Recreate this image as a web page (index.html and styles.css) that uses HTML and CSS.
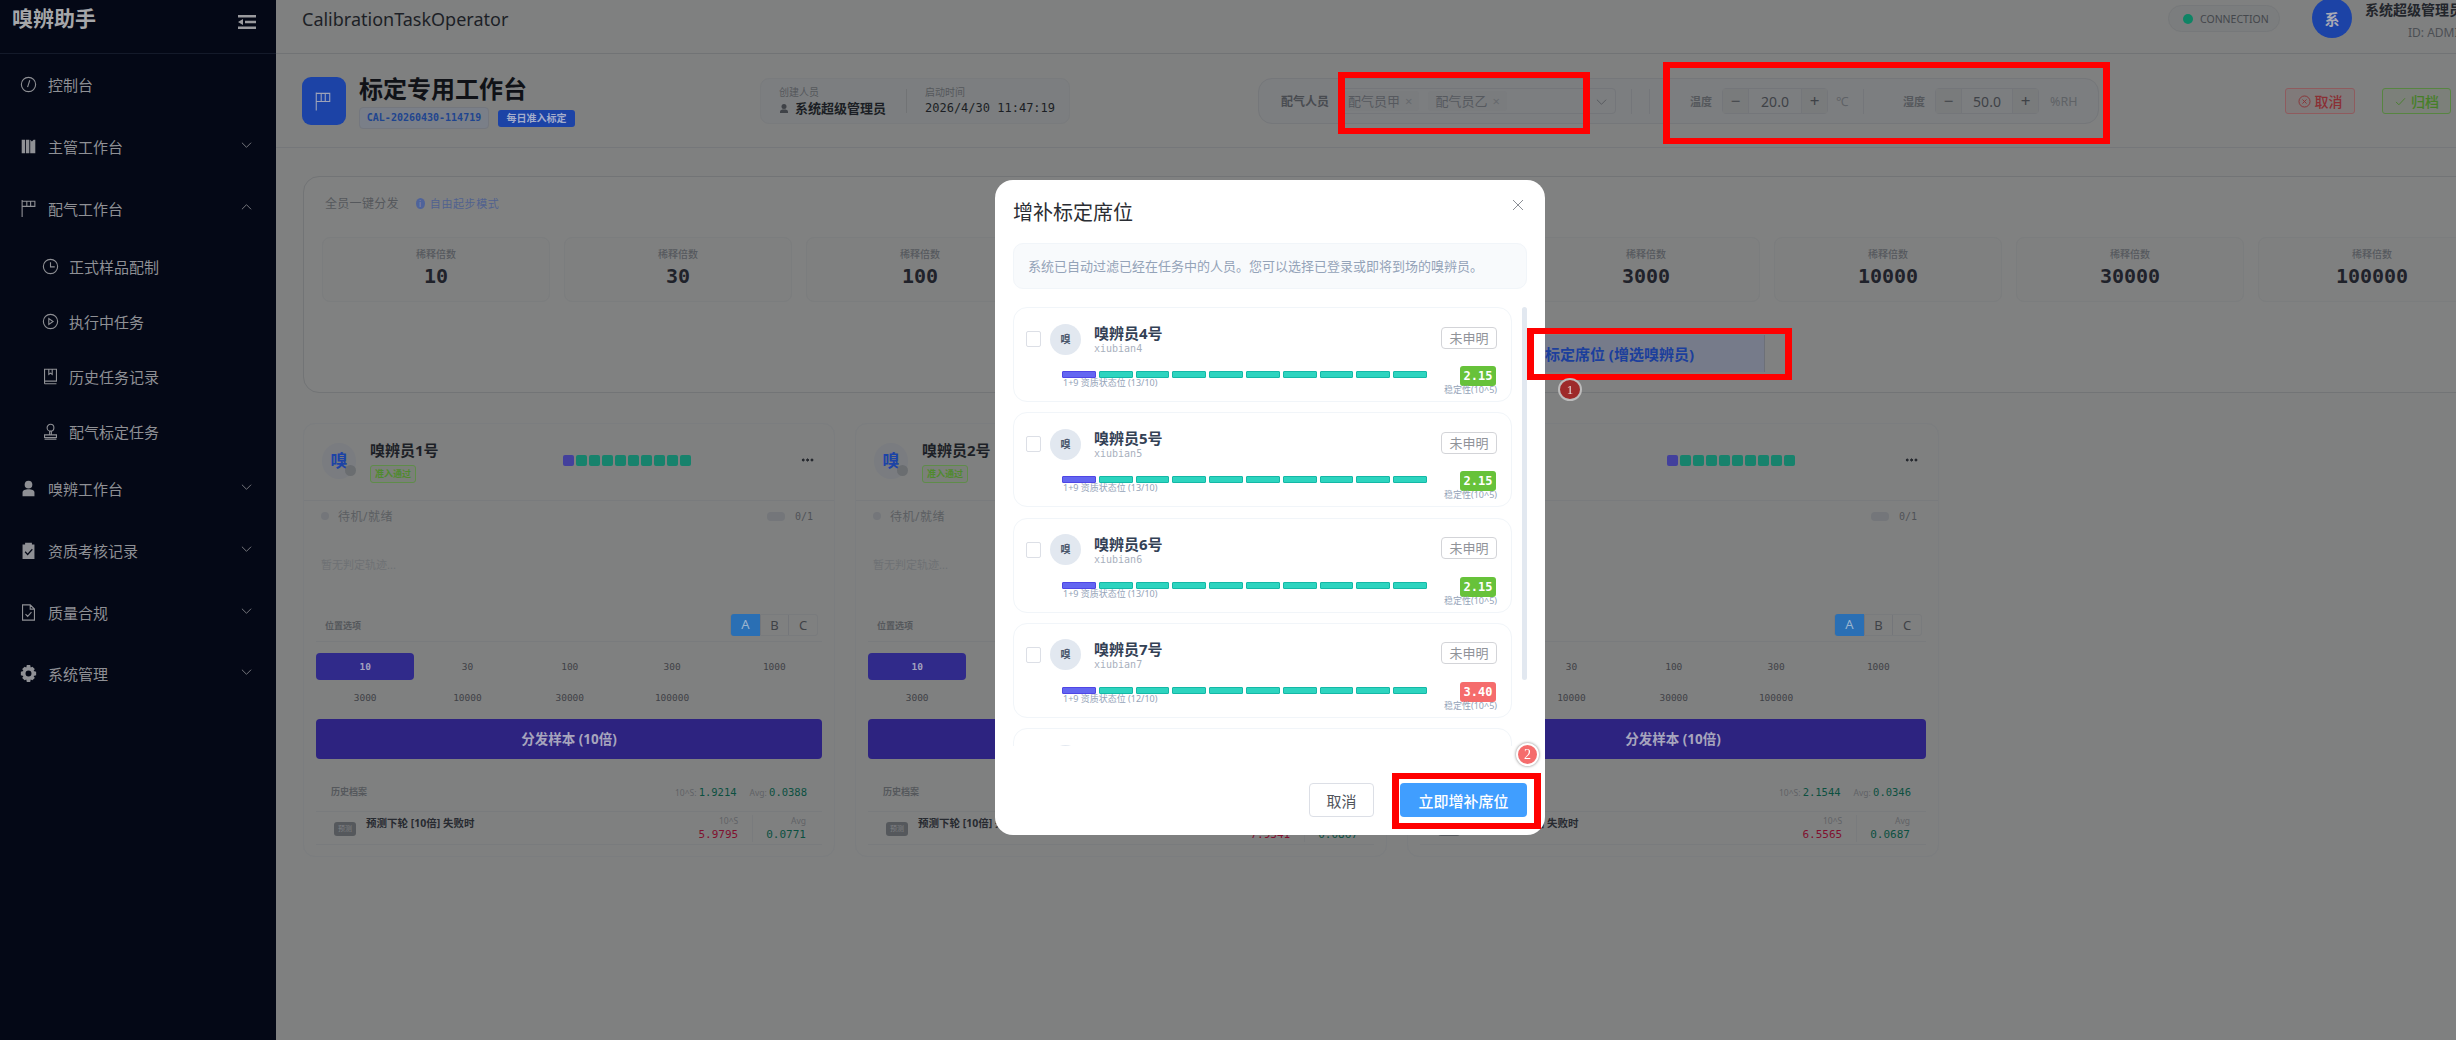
FILE: index.html
```html
<!DOCTYPE html>
<html lang="zh">
<head>
<meta charset="utf-8">
<title>CalibrationTaskOperator</title>
<link rel="stylesheet" href="styles.css">
</head>
<body>
<div class="app">
  <aside class="sidebar">
    <div class="logo-row"><span class="logo">嗅辨助手</span>
      <svg class="fold" viewBox="0 0 18 16"><path d="M0 1h18v2.4H0zM7 6.8h11v2.4H7zM0 12.6h18V15H0zM5 5v6L0 8z"/></svg>
    </div>
    <nav class="menu">
      <div class="mi"><svg class="ic" viewBox="0 0 20 20"><circle cx="10" cy="10" r="8.4"/><path d="M11.5 5l-2.6 8M7 14.500h0"/></svg><span>控制台</span></div>
      <div class="mi"><svg class="ic fill" viewBox="0 0 20 20"><path d="M2 2h4v16H2zM7 2h4v16H7zM12 2l2 2 2-2h2v16h-6z"/></svg><span>主管工作台</span><svg class="arrow" viewBox="0 0 12 8"><path d="M1 1.500l5 5 5-5"/></svg></div>
      <div class="mi"><svg class="ic" viewBox="0 0 20 20"><path d="M2.500 0v20M2.500 1.500h15v6h-15M8 1.500v6M12.500 1.500v6"/></svg><span>配气工作台</span><svg class="arrow" viewBox="0 0 12 8"><path d="M1 6.500l5-5 5 5"/></svg></div>
      <div class="mi sub"><svg class="ic" viewBox="0 0 20 20"><circle cx="10" cy="10" r="8.400"/><path d="M10 5v5.500h5"/></svg><span>正式样品配制</span></div>
      <div class="mi sub"><svg class="ic" viewBox="0 0 20 20"><circle cx="10" cy="10" r="8.400"/><path d="M8 6.500v7l5-3.500z"/></svg><span>执行中任务</span></div>
      <div class="mi sub"><svg class="ic" viewBox="0 0 20 20"><path d="M3 1.500h14v14H3zM3 18.500h14M3 15.500v3M8 1.500v6l2-1.500 2 1.500v-6"/></svg><span>历史任务记录</span></div>
      <div class="mi sub"><svg class="ic" viewBox="0 0 20 20"><circle cx="10" cy="5.500" r="4"/><path d="M9 9.500v4M11 9.500v4M3 14h14v3H3zM3 19h14"/></svg><span>配气标定任务</span></div>
      <div class="mi"><svg class="ic fill" viewBox="0 0 20 20"><circle cx="10" cy="5.500" r="4.500"/><path d="M3 19v-4c0-3 3-4 7-4s7 1 7 4v4z"/></svg><span>嗅辨工作台</span><svg class="arrow" viewBox="0 0 12 8"><path d="M1 1.500l5 5 5-5"/></svg></div>
      <div class="mi"><svg class="ic fill" viewBox="0 0 20 20"><path fill-rule="evenodd" d="M3 3h3V1h8v2h3v17H3zM6.500 11L5.500 12l3.500 4 6-7-1-1-5 5.500z"/></svg><span>资质考核记录</span><svg class="arrow" viewBox="0 0 12 8"><path d="M1 1.500l5 5 5-5"/></svg></div>
      <div class="mi"><svg class="ic" viewBox="0 0 20 20"><path d="M3 1h9l5 5v13H3zM12 1v5h5M6.500 12l2.500 2.500 4.500-5"/></svg><span>质量合规</span><svg class="arrow" viewBox="0 0 12 8"><path d="M1 1.500l5 5 5-5"/></svg></div>
      <div class="mi"><svg class="ic fill" viewBox="0 0 20 20"><path fill-rule="evenodd" d="M8 0h4l.6 3 2-1 2.800 2.800-1.400 2.200 3 .8v4.400l-3 .8 1.400 2.200-2.800 2.800-2-1-.6 3H8l-.6-3-2 1-2.800-2.800L4 12.800 1 12V7.800l3-.8-1.400-2.200L5.400 2l2 1zM10 6.500a3.500 3.500 0 100 7 3.500 3.500 0 000-7z"/></svg><span>系统管理</span><svg class="arrow" viewBox="0 0 12 8"><path d="M1 1.500l5 5 5-5"/></svg></div>
    </nav>
  </aside>

  <main class="main">
    <header class="topbar">
      <div class="app-title">CalibrationTaskOperator</div>
      <div class="conn"><i class="conn-dot"></i>CONNECTION</div>
      <div class="user-avatar">系</div>
      <div class="user-text"><div class="user-name">系统超级管理员</div><div class="user-id">ID: ADMIN</div></div>
    </header>

    <section class="head">
      <div class="head-icon"><svg viewBox="0 0 20 20"><path d="M2.500 0v20M2.500 1h15v9h-15M8 1v9M12.500 1v9"/></svg></div>
      <div class="head-title">
        <h1>标定专用工作台</h1>
        <div class="head-tags"><span class="code-tag">CAL-20260430-114719</span><span class="daily-tag">每日准入标定</span></div>
      </div>
      <div class="info-pill">
        <div class="info-a"><div class="info-label">创建人员</div><div class="info-name"><svg class="mini-user" viewBox="0 0 20 20"><circle cx="10" cy="6" r="5"/><path d="M2 19v-3c0-3 4-4 8-4s8 1 8 4v3z"/></svg>系统超级管理员</div></div>
        <div class="info-b"><div class="info-label">启动时间</div><div class="info-time">2026/4/30 11:47:19</div></div>
      </div>
      <div class="config-pill">
        <span class="cfg-label">配气人员</span>
        <div class="select">
          <span class="chip">配气员甲<em>×</em></span><span class="chip">配气员乙<em>×</em></span>
          <svg class="sel-arrow" viewBox="0 0 12 8"><path d="M1 1.500l5 5 5-5"/></svg>
        </div>
        <i class="vline v1"></i><i class="vline v2"></i>
        <span class="env-label l1">温度</span>
        <div class="stepper"><b>−</b><span>20.0</span><b>+</b></div>
        <span class="unit u1">℃</span>
        <i class="vline v3"></i>
        <span class="env-label l2">湿度</span>
        <div class="stepper s2"><b>−</b><span>50.0</span><b>+</b></div>
        <span class="unit u2">%RH</span>
      </div>
      <button class="act act-red"><svg viewBox="0 0 16 16"><circle cx="8" cy="8" r="6.800"/><path d="M5.500 5.500l5 5M10.500 5.500l-5 5"/></svg>取消</button>
      <button class="act act-green"><svg viewBox="0 0 16 16"><path d="M2.500 8.500l3.500 3.500 7.500-8"/></svg>归档</button>
    </section>

    <div class="content">
      <section class="panel">
        <div class="panel-head"><span class="panel-title">全员一键分发</span><span class="panel-mode"><i>i</i>自由起步模式</span></div>
        <div class="tiles">
          <div class="tile"><small>稀释倍数</small><strong>10</strong></div>
          <div class="tile"><small>稀释倍数</small><strong>30</strong></div>
          <div class="tile"><small>稀释倍数</small><strong>100</strong></div>
          <div class="tile"><small>稀释倍数</small><strong>300</strong></div>
          <div class="tile"><small>稀释倍数</small><strong>1000</strong></div>
          <div class="tile"><small>稀释倍数</small><strong>3000</strong></div>
          <div class="tile"><small>稀释倍数</small><strong>10000</strong></div>
          <div class="tile"><small>稀释倍数</small><strong>30000</strong></div>
          <div class="tile"><small>稀释倍数</small><strong>100000</strong></div>
        </div>
        <div class="add-seat">增补标定席位 (增选嗅辨员)</div>
      </section>

      <div class="ops">
        <article class="op">
          <div class="op-head">
            <div class="op-avatar">嗅<i></i></div>
            <div class="op-id"><div class="op-name">嗅辨员1号</div><span class="pass">准入通过</span></div>
            <div class="dots"><i class="p"></i><i></i><i></i><i></i><i></i><i></i><i></i><i></i><i></i><i></i></div>
            <div class="more"></div>
          </div>
          <div class="op-status"><i class="st-dot"></i><span class="st-text">待机/就绪</span><i class="st-pill"></i><span class="st-count">0/1</span></div>
          <div class="op-empty">暂无判定轨迹...</div>
          <div class="pos-row"><span>位置选项</span><div class="seg"><b class="on">A</b><b>B</b><b>C</b></div></div>
          <div class="dil"><span class="on">10</span><span>30</span><span>100</span><span>300</span><span>1000</span><span>3000</span><span>10000</span><span>30000</span><span>100000</span></div>
          <div class="send">分发样本 (10倍)</div>
          <div class="hist-head"><span class="hist-title">历史档案</span><span class="hist-stat">10^S: <b>1.9214</b></span><span class="hist-stat">Avg: <b>0.0388</b></span></div>
          <div class="hist-row"><span class="hist-icon">预测</span><span class="hist-name">预测下轮 [10倍] 失败时</span>
            <div class="hist-val s"><small>10^S</small><b class="bad">5.9795</b></div><div class="hist-val"><small>Avg</small><b>0.0771</b></div></div>
        </article>

        <article class="op">
          <div class="op-head">
            <div class="op-avatar">嗅<i></i></div>
            <div class="op-id"><div class="op-name">嗅辨员2号</div><span class="pass">准入通过</span></div>
            <div class="dots"><i class="p"></i><i></i><i></i><i></i><i></i><i></i><i></i><i></i><i></i><i></i></div>
            <div class="more"></div>
          </div>
          <div class="op-status"><i class="st-dot"></i><span class="st-text">待机/就绪</span><i class="st-pill"></i><span class="st-count">0/1</span></div>
          <div class="op-empty">暂无判定轨迹...</div>
          <div class="pos-row"><span>位置选项</span><div class="seg"><b class="on">A</b><b>B</b><b>C</b></div></div>
          <div class="dil"><span class="on">10</span><span>30</span><span>100</span><span>300</span><span>1000</span><span>3000</span><span>10000</span><span>30000</span><span>100000</span></div>
          <div class="send">分发样本 (10倍)</div>
          <div class="hist-head"><span class="hist-title">历史档案</span><span class="hist-stat">10^S: <b>2.0312</b></span><span class="hist-stat">Avg: <b>0.0402</b></span></div>
          <div class="hist-row"><span class="hist-icon">预测</span><span class="hist-name">预测下轮 [10倍] 失败时</span>
            <div class="hist-val s"><small>10^S</small><b class="bad">7.9341</b></div><div class="hist-val"><small>Avg</small><b>0.0867</b></div></div>
        </article>

        <article class="op">
          <div class="op-head">
            <div class="op-avatar">嗅<i></i></div>
            <div class="op-id"><div class="op-name">嗅辨员3号</div><span class="pass">准入通过</span></div>
            <div class="dots"><i class="p"></i><i></i><i></i><i></i><i></i><i></i><i></i><i></i><i></i><i></i></div>
            <div class="more"></div>
          </div>
          <div class="op-status"><i class="st-dot"></i><span class="st-text">待机/就绪</span><i class="st-pill"></i><span class="st-count">0/1</span></div>
          <div class="op-empty">暂无判定轨迹...</div>
          <div class="pos-row"><span>位置选项</span><div class="seg"><b class="on">A</b><b>B</b><b>C</b></div></div>
          <div class="dil"><span class="on">10</span><span>30</span><span>100</span><span>300</span><span>1000</span><span>3000</span><span>10000</span><span>30000</span><span>100000</span></div>
          <div class="send">分发样本 (10倍)</div>
          <div class="hist-head"><span class="hist-title">历史档案</span><span class="hist-stat">10^S: <b>2.1544</b></span><span class="hist-stat">Avg: <b>0.0346</b></span></div>
          <div class="hist-row"><span class="hist-icon">预测</span><span class="hist-name">预测下轮 [10倍] 失败时</span>
            <div class="hist-val s"><small>10^S</small><b class="bad">6.5565</b></div><div class="hist-val"><small>Avg</small><b>0.0687</b></div></div>
        </article>
      </div>
    </div>
  </main>
</div>

<div class="dialog">
  <div class="dlg-head"><h2>增补标定席位</h2><svg class="dlg-close" viewBox="0 0 12 12"><path d="M1 1l10 10M11 1L1 11"/></svg></div>
  <div class="dlg-note">系统已自动过滤已经在任务中的人员。您可以选择已登录或即将到场的嗅辨员。</div>
  <div class="dlg-list">
    <div class="cands">
      <div class="cand">
        <div class="cand-top"><i class="check"></i><span class="cand-av">嗅</span><div class="cand-id"><div class="cand-name">嗅辨员4号</div><div class="cand-user">xiubian4</div></div><span class="undeclared">未申明</span></div>
        <div class="cand-metric"><div class="bar-col"><div class="bar"><i class="p"></i><i></i><i></i><i></i><i></i><i></i><i></i><i></i><i></i><i></i></div><div class="bar-label">1+9 资质状态位 (13/10)</div></div>
        <div class="score-col"><span class="score">2.15</span><div class="score-label">稳定性(10^5)</div></div></div>
      </div>
      <div class="cand">
        <div class="cand-top"><i class="check"></i><span class="cand-av">嗅</span><div class="cand-id"><div class="cand-name">嗅辨员5号</div><div class="cand-user">xiubian5</div></div><span class="undeclared">未申明</span></div>
        <div class="cand-metric"><div class="bar-col"><div class="bar"><i class="p"></i><i></i><i></i><i></i><i></i><i></i><i></i><i></i><i></i><i></i></div><div class="bar-label">1+9 资质状态位 (13/10)</div></div>
        <div class="score-col"><span class="score">2.15</span><div class="score-label">稳定性(10^5)</div></div></div>
      </div>
      <div class="cand">
        <div class="cand-top"><i class="check"></i><span class="cand-av">嗅</span><div class="cand-id"><div class="cand-name">嗅辨员6号</div><div class="cand-user">xiubian6</div></div><span class="undeclared">未申明</span></div>
        <div class="cand-metric"><div class="bar-col"><div class="bar"><i class="p"></i><i></i><i></i><i></i><i></i><i></i><i></i><i></i><i></i><i></i></div><div class="bar-label">1+9 资质状态位 (13/10)</div></div>
        <div class="score-col"><span class="score">2.15</span><div class="score-label">稳定性(10^5)</div></div></div>
      </div>
      <div class="cand">
        <div class="cand-top"><i class="check"></i><span class="cand-av">嗅</span><div class="cand-id"><div class="cand-name">嗅辨员7号</div><div class="cand-user">xiubian7</div></div><span class="undeclared">未申明</span></div>
        <div class="cand-metric"><div class="bar-col"><div class="bar"><i class="p"></i><i></i><i></i><i></i><i></i><i></i><i></i><i></i><i></i><i></i></div><div class="bar-label">1+9 资质状态位 (12/10)</div></div>
        <div class="score-col"><span class="score red">3.40</span><div class="score-label">稳定性(10^5)</div></div></div>
      </div>
      <div class="cand">
        <div class="cand-top"><i class="check"></i><span class="cand-av">嗅</span><div class="cand-id"><div class="cand-name">嗅辨员8号</div><div class="cand-user">xiubian8</div></div><span class="undeclared">未申明</span></div>
      </div>
    </div>
    <div class="dlg-scroll"></div>
  </div>
  <div class="dlg-foot"><button class="btn-cancel">取消</button><button class="btn-primary">立即增补席位</button></div>
</div>

<i class="mark m-tags"></i>
<i class="mark m-env"></i>
<i class="mark m-seat"></i>
<i class="mark m-submit"></i>
<span class="pin pin-1">1</span>
<span class="pin pin-2">2</span>
</body>
</html>
```
FILE: styles.css
```css
*{box-sizing:border-box}
html,body{margin:0;height:100%;overflow:hidden}
body{background:#7f8080;font-family:"Noto Sans","Noto Sans CJK SC",sans-serif;color:#1a1d24;width:2456px;height:1040px;position:relative}
i,em{font-style:normal}
button{font-family:inherit;cursor:default}
.app{display:flex;width:2531px;height:1040px}

.sidebar{width:276px;flex:none;background:#040816;color:#8f9095}
.logo-row{height:54px;border-bottom:1px solid #141a2a;display:flex;align-items:flex-start;justify-content:space-between;padding:3px 20px 0 12px}
.logo{font-size:21px;line-height:30px;font-weight:700;color:#a5a6a9}
.fold{width:18px;height:16px;margin-top:11px;fill:#9a9a9e}
.menu{display:flex;flex-direction:column}
.mi{height:62px;display:flex;align-items:center;padding-left:20px;font-size:15px;position:relative;top:-1px}
.mi span{margin-left:11px}
.mi.sub{height:55px;padding-left:42px}
.mi.sub span{margin-left:10px}
.mi:nth-child(8){margin-top:-2px}
.mi:nth-child(11){margin-top:-1px}
.ic{width:17px;height:17px;fill:none;stroke:#8f9095;stroke-width:1.3;flex:none}
.ic.fill{fill:#8f9095;stroke:none}
.arrow{width:11px;height:8px;position:absolute;left:241px;top:26px;fill:none;stroke:#7f8085;stroke-width:1}

.main{flex:1;min-width:0;display:flex;flex-direction:column}
.topbar{height:54px;border-bottom:1px solid #717375;display:flex;align-items:flex-start;padding-left:26px;position:relative}
.app-title{font-size:18px;line-height:26px;margin-top:6px;color:#1c1f26;width:1866px;font-weight:400}
.conn{width:112px;height:27px;margin-top:5px;border:1px solid #76787a;border-radius:14px;display:flex;align-items:center;padding-left:14px;font-size:10.500px;color:#44474c;background:#7b7d7e}
.conn-dot{width:10px;height:10px;border-radius:50%;background:#0e8465;margin-right:7px}
.user-avatar{width:40px;height:40px;border-radius:50%;background:#1c43a6;margin:-2px 0 0 32px;display:flex;align-items:center;justify-content:center;color:#a9a9b5;font-size:15px;font-weight:700}
.user-text{margin-left:13px;width:150px;text-align:right}
.user-name{font-size:14px;line-height:20px;font-weight:700;color:#22252b;text-align:left}
.user-id{font-size:12px;line-height:18px;margin-top:4px;color:#4c4f54;padding-left:43px;text-align:left}

.head{height:94px;border-bottom:1px solid #75777a;display:flex;align-items:flex-start;padding:24px 0 0 26px}
.head-icon{width:44px;height:48px;background:#1c43a6;border-radius:9px;display:flex;align-items:center;justify-content:center;margin-top:-1px}
.head-icon svg{width:18px;height:19px;fill:none;stroke:#9ea3b8;stroke-width:1.200;margin-right:2px}
.head-title{width:401px;margin-left:13px}
.head-title h1{margin:0;font-size:24px;line-height:28px;font-weight:700;color:#101217;margin-top:-3px}
.head-tags{display:flex;align-items:center;margin-top:4px}
.code-tag{width:130px;height:22px;text-align:center;font:700 10px/20px "DejaVu Sans Mono",monospace;background:#7a7f88;border:1px solid #74777e;border-radius:4px;color:#1f458f;white-space:nowrap}
.daily-tag{width:77px;height:17px;line-height:17px;text-align:center;background:#1c43a6;color:#a3accb;font-size:10px;font-weight:700;border-radius:3px;margin-left:9px}
.info-pill{width:310px;height:46px;background:#7c7e80;border:1px solid #797b7d;border-radius:9px;display:flex;align-items:center;padding-left:18px}
.info-a{width:128px;height:24px;border-right:1px solid #717375}
.info-b{margin-left:18px;height:24px}
.info-label{font-size:10px;line-height:12px;color:#55585c;margin-top:-3px;white-space:nowrap}
.info-name{font-size:13px;line-height:18px;font-weight:700;color:#1b1e24;display:flex;align-items:center;margin-top:1px;white-space:nowrap}
.mini-user{width:10px;height:11px;fill:#3f4247;margin-right:6px}
.info-time{font:12px/18px "DejaVu Sans Mono",monospace;color:#1b1e24;margin-top:1px;white-space:nowrap}

.config-pill{width:841px;height:46px;margin-left:188px;background:#7c7e80;border:1px solid #75777a;border-radius:14px;display:flex;align-items:center;padding-left:22px;font-size:12px}
.cfg-label{width:46px;color:#484b50;font-weight:700;white-space:nowrap}
.select{width:277px;height:26px;margin-left:12px;border:1px solid #74767a;border-radius:4px;display:flex;align-items:center;padding-left:1px;position:relative;font-size:13px}
.chip{height:20px;line-height:20px;padding:0 7px;background:#7a7c7e;color:#56595e;border-radius:3px;margin-right:9px;white-space:nowrap}
.chip em{margin-left:5px;font-size:13px;color:#66696d}
.sel-arrow{position:absolute;right:8px;top:9px;width:11px;height:8px;fill:none;stroke:#55585c;stroke-width:1}
.vline{width:1px;height:25px;background:#74767a;flex:none}
.v1{margin-left:15px}
.v2{margin-left:17px}
.env-label{color:#55585c;font-size:11px;white-space:nowrap;font-weight:700}
.l1{margin-left:40px;width:22px}
.l2{margin-left:39px;width:22px}
.stepper{width:106px;height:26px;margin-left:10px;border:1px solid #74767a;border-radius:4px;display:grid;grid-template-columns:26px 1fr 26px;align-items:center;text-align:center;font-size:14px;color:#3f4247}
.stepper.s2{width:104px}
.stepper b{font-weight:400;font-size:17px;line-height:24px;color:#3f4247;height:24px}
.stepper b:first-child{border-right:1px solid #74767a;background:#797b7c}
.stepper b:last-child{border-left:1px solid #74767a;background:#797b7c}
.unit{color:#5f6266;font-size:12.500px;margin-left:8px;white-space:nowrap}
.u1{width:27px}
.u2{margin-left:11px}
.act{height:26px;border-radius:3px;display:flex;align-items:center;justify-content:center;font-size:14px;font-weight:500;padding:0;margin-top:10px}
.act svg{width:13px;height:13px;fill:none;stroke-width:1.100;margin-right:4px}
.act-red{width:70px;margin-left:186px;border:1px solid #8f5b5e;color:#8a2f34;background:#807a7a}
.act-red svg{stroke:#8a2f34}
.act-green{width:69px;margin-left:27px;border:1px solid #578541;color:#467f28;background:#7c807a}
.act-green svg{stroke:#467f28}

.content{padding:28px 27px 0 27px;flex:1}
.panel{height:217px;border:1px solid #727476;border-radius:16px;padding:0 18px;position:relative;background:#808181}
.panel-head{height:60px;display:flex;align-items:center;padding:0 0 8px 3px}
.panel-title{font-size:12px;color:#55585c;letter-spacing:.300px}
.panel-mode{font-size:11px;color:#51628f;margin-left:17px;display:flex;align-items:center;letter-spacing:.600px}
.panel-mode i{width:9px;height:11px;border-radius:50%;background:#4f639a;color:#8a94ae;font-size:8px;line-height:11px;text-align:center;margin-right:5px}
.tiles{display:grid;grid-template-columns:repeat(9,228px);gap:14px}
.tile{height:65px;border:1px solid #7b7d7e;border-radius:8px;display:flex;flex-direction:column;align-items:center;background:#7f8080}
.tile small{font-size:10px;line-height:14px;color:#56595e;margin-top:9px;font-weight:500}
.tile strong{font:700 20px/24px "DejaVu Sans Mono",monospace;color:#1f222a;margin-top:3px}
.add-seat{width:330px;height:37px;margin:33px 0 0 1113px;background:#767b8a;border-right:1px solid #6d7078;display:flex;align-items:center;justify-content:flex-end;padding-right:70px;font-size:15px;font-weight:700;color:#1c3f9c;white-space:nowrap}

.ops{display:grid;grid-template-columns:repeat(3,532px);gap:20px;margin-top:30px}
.op{height:434px;border:1px solid #7b7d7f;border-radius:12px;padding:0 12px;position:relative;background:#7f8080}
.op-head{height:77px;border-bottom:1px solid #797b7d;margin:0 -12px;padding:19px 0 0 18px;display:flex;align-items:flex-start}
.op-avatar{width:34px;height:36px;border-radius:50%;background:#7a7c80;color:#1c43a6;font-size:17px;font-weight:700;line-height:36px;text-align:center;position:relative}
.op-avatar i{position:absolute;right:0;bottom:3px;width:11px;height:11px;border-radius:50%;background:#6a6d70}
.op-id{margin-left:14px;width:193px}
.op-name{font-size:15px;line-height:20px;font-weight:700;color:#1c1f26;margin-top:-3px;white-space:nowrap}
.pass{display:block;width:46px;height:18px;margin-top:5px;line-height:16px;font-size:9px;text-align:center;border:1px solid #5f8c4a;border-radius:3px;color:#4f8a2e;white-space:nowrap;background:#7b8079;font-weight:700}
.dots{display:flex;gap:2px;margin-top:12px}
.dots i{width:11px;height:11px;border-radius:2px;background:#17826c}
.dots i.p{background:#43409c}
.more{width:13px;height:4px;margin:15px 0 0 110px;background:radial-gradient(circle,#26292f 1.400px,transparent 1.700px) 0 0/4.400px 4px}
.op-status{height:30px;display:flex;align-items:center;padding:0 5px;font-size:12px;color:#5b5e62}
.st-dot{width:8px;height:8px;border-radius:50%;background:#74767a}
.st-text{margin-left:9px;letter-spacing:.500px;flex:1}
.st-pill{width:18px;height:9px;background:#74767a;border-radius:4px}
.st-count{font:10px "DejaVu Sans Mono",monospace;margin-left:10px;color:#4f5257;margin-right:4px}
.op-empty{height:81px;padding:26px 0 0 5px;font-size:11px;line-height:16px;color:#6e7174}
.pos-row{height:30px;border-bottom:1px solid #797b7d;display:flex;align-items:center;justify-content:space-between;padding:0 4px 3px 9px;font-size:9px;font-weight:700;color:#55585c}
.seg{width:88px;height:22px;display:grid;grid-template-columns:1fr 1fr 1fr;border:1px solid #797b7d;border-radius:3px}
.seg b{font-size:13px;line-height:20px;text-align:center;font-weight:400;color:#3f4247;border-left:1px solid #74767a}
.seg b.on{background:#2a6fb4;color:#9ab4cf;border:0;border-radius:3px 0 0 3px;margin:-1px 0}
.dil{display:grid;grid-template-columns:repeat(5,98.300px);gap:4px;margin-top:11px}
.dil span{height:27px;text-align:center;font:9.500px/27px "DejaVu Sans Mono",monospace;color:#3f4247;border-radius:4px}
.dil span.on{background:#302a8a;color:#a2a2be;font-weight:700}
.send{height:40px;margin-top:8px;background:#2d2380;border-radius:4px;color:#a7a5bd;font-size:13.500px;font-weight:700;line-height:40px;text-align:center}
.hist-head{height:53px;border-bottom:1px solid #797b7d;display:flex;align-items:center;padding:13px 15px 0 15px;font-size:8.500px}
.hist-title{flex:1;font-weight:700;color:#55585c;font-size:9px}
.hist-stat{color:#5f6266;margin-left:13px;white-space:nowrap}
.hist-stat b{font:500 10.500px "DejaVu Sans Mono",monospace;color:#0c5040}
.hist-row{height:33px;border-bottom:1px solid #797b7d;display:flex;align-items:flex-start;padding:6px 16px 0 18px}
.hist-icon{width:22px;height:14px;margin-top:4px;background:#55585c;border-radius:3px;color:#7f8083;font-size:7px;line-height:14px;text-align:center}
.hist-name{font-size:10.500px;line-height:16px;font-weight:700;color:#272a30;margin-left:10px;flex:1;white-space:nowrap;margin-top:-3px}
.hist-val{text-align:right;margin-top:-3px}
.hist-val.s{padding-right:14px;border-right:1px solid #797b7d;margin-right:13px;height:27px}
.hist-val small{display:block;font-size:8.500px;line-height:12px;color:#5f6266}
.hist-val b{display:block;font:500 11px/16px "DejaVu Sans Mono",monospace;color:#0c5040}
.hist-val b.bad{color:#80102f}

.dialog{position:fixed;left:995px;top:180px;width:550px;height:655px;background:#fff;border-radius:18px;z-index:10;padding:0 18px;display:flex;flex-direction:column}
.dlg-head{height:63px;display:flex;justify-content:space-between;align-items:flex-start;position:relative}
.dlg-head h2{margin:19px 0 0;font-size:20px;line-height:28px;font-weight:400;color:#2a2d33}
.dlg-close{position:absolute;right:3px;top:19px;width:12px;height:12px;fill:none;stroke:#8b8f96;stroke-width:1}
.dlg-note{height:46px;background:#f8fafc;border:1px solid #f1f5f9;border-radius:10px;padding-left:14px;font-size:13px;line-height:44px;color:#94a3b8;white-space:nowrap}
.dlg-list{height:439px;margin-top:18px;position:relative;overflow:hidden}
.cands{display:flex;flex-direction:column;gap:10.300px;width:499px}
.cand{height:95px;flex:none;border:1px solid #f1f5f9;border-radius:14px;padding:15px 14px 0 12px}
.cand-top{display:flex;align-items:center;height:32px}
.check{width:15px;height:16px;border:1px solid #dcdfe6;border-radius:2px;background:#fff}
.cand-av{width:31px;height:31px;border-radius:50%;background:#e2e8f0;color:#475569;font-size:10px;font-weight:700;text-align:center;line-height:31px;margin-left:9px;flex:none}
.cand-id{flex:1;margin-left:13px;align-self:flex-start}
.cand-name{font-size:15px;line-height:20px;font-weight:700;color:#334155}
.cand-user{font:10px/14px "DejaVu Sans Mono",monospace;color:#a8b0bd;margin-top:-1px}
.undeclared{width:56px;height:22px;border:1px solid #d3d4d8;border-radius:4px;text-align:center;font-size:13px;line-height:20px;color:#909399;margin-top:-3px}
.cand-metric{display:flex;justify-content:space-between;margin-top:11px;padding-left:36px}
.bar-col{width:365px;padding-top:5px}
.bar{display:grid;grid-template-columns:repeat(10,1fr);gap:3px;height:7px}
.bar i{background:#2dd4bf;border:1px solid #14b8a6;border-radius:1px}
.bar i.p{background:#6366f1;border-color:#4f46e5}
.bar-label{font-size:9px;line-height:9px;color:#94a3b8;white-space:nowrap;margin-left:1px}
.score-col{width:56px;display:flex;flex-direction:column;align-items:flex-end}
.score{width:36px;height:20px;background:#67c23a;color:#fff;font:700 12px/20px "DejaVu Sans Mono",monospace;text-align:center;border-radius:3px;margin-right:1px}
.score.red{background:#f56c6c}
.score-label{font-size:9px;line-height:9px;color:#94a3b8;white-space:nowrap;margin-top:-1px}
.dlg-scroll{position:absolute;left:509px;top:0;width:5px;height:373px;background:#e2e8f0;border-radius:3px}
.dlg-foot{flex:1;display:flex;justify-content:flex-end;padding-top:37px;background:#fff}
.btn-cancel{width:65px;height:34px;background:#fff;border:1px solid #dcdfe6;border-radius:4px;font-size:15px;color:#51555c;padding:0}
.btn-primary{width:127px;height:34px;background:#409eff;border:0;border-radius:4px;font-size:15px;color:#fff;margin-left:26px;padding:0;font-weight:500}

.mark{position:fixed;z-index:20;border:solid #f00;border-width:6px 7px;background:transparent}
.m-tags{left:1338px;top:72px;width:252px;height:62px}
.m-env{left:1663px;top:62px;width:447px;height:82px}
.m-seat{left:1527px;top:328px;width:265px;height:52px}
.m-submit{left:1392px;top:773px;width:149px;height:56px}
.pin{position:fixed;z-index:21;border-radius:50%;display:flex;align-items:center;justify-content:center;font-family:"Liberation Serif",serif;color:#fff}
.pin-1{left:1558px;top:378px;width:24px;height:23px;background:#9e2a2a;border:2px solid #bcbcbc;font-size:13px;color:#e4dada}
.pin-2{left:1516px;top:743px;width:23px;height:23px;background:#f56c6c;border:2px solid #fff;box-shadow:0 0 3px rgba(0,0,0,.5);font-size:14px}
```
